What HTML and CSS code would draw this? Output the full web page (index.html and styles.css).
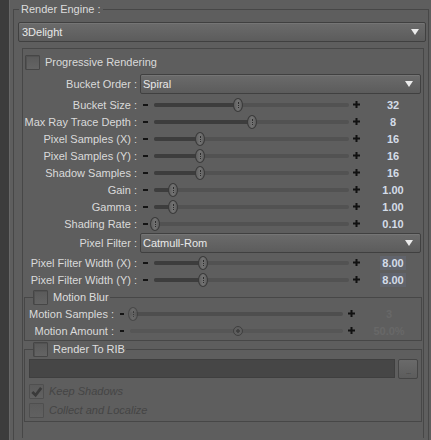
FILE: index.html
```html
<!DOCTYPE html>
<html>
<head>
<meta charset="utf-8">
<link rel="stylesheet" href="styles.css">
</head>
<body>
<div class="strip"></div>
<div class="main">
  <fieldset class="engine">
    <legend class="engine-title">Render Engine :</legend>
    <div class="engine-body">
      <div class="select big"><span>3Delight</span><svg class="arrow" width="8" height="6" viewBox="0 0 8 6"><path d="M0 0H8L4 6Z" fill="#ececec"/></svg></div>
      <div class="frame">
        <div class="check-row first"><span class="cb"></span><span>Progressive Rendering</span></div>

        <div class="row sel-row"><span class="lbl">Bucket Order :</span><div class="select"><span>Spiral</span><svg class="arrow" width="8" height="6" viewBox="0 0 8 6"><path d="M0 0H8L4 6Z" fill="#ececec"/></svg></div></div>

        <div class="sliders">
          <div class="row srow"><span class="lbl">Bucket Size :</span><span class="minus"></span><span class="track" style="--p:84px"><span class="fill"></span><span class="thumb"></span></span><svg class="plus" width="7" height="7" viewBox="0 0 7 7"><path d="M2.5 0h2v7h-2zM0 2.5h7v2H0z" fill="#111"/></svg><span class="val">32</span></div>
          <div class="row srow"><span class="lbl">Max Ray Trace Depth :</span><span class="minus"></span><span class="track" style="--p:98px"><span class="fill"></span><span class="thumb"></span></span><svg class="plus" width="7" height="7" viewBox="0 0 7 7"><path d="M2.5 0h2v7h-2zM0 2.5h7v2H0z" fill="#111"/></svg><span class="val">8</span></div>
          <div class="row srow"><span class="lbl">Pixel Samples (X) :</span><span class="minus"></span><span class="track" style="--p:46px"><span class="fill"></span><span class="thumb"></span></span><svg class="plus" width="7" height="7" viewBox="0 0 7 7"><path d="M2.5 0h2v7h-2zM0 2.5h7v2H0z" fill="#111"/></svg><span class="val">16</span></div>
          <div class="row srow"><span class="lbl">Pixel Samples (Y) :</span><span class="minus"></span><span class="track" style="--p:46px"><span class="fill"></span><span class="thumb"></span></span><svg class="plus" width="7" height="7" viewBox="0 0 7 7"><path d="M2.5 0h2v7h-2zM0 2.5h7v2H0z" fill="#111"/></svg><span class="val">16</span></div>
          <div class="row srow"><span class="lbl">Shadow Samples :</span><span class="minus"></span><span class="track" style="--p:46px"><span class="fill"></span><span class="thumb"></span></span><svg class="plus" width="7" height="7" viewBox="0 0 7 7"><path d="M2.5 0h2v7h-2zM0 2.5h7v2H0z" fill="#111"/></svg><span class="val">16</span></div>
          <div class="row srow"><span class="lbl">Gain :</span><span class="minus"></span><span class="track" style="--p:19px"><span class="fill"></span><span class="thumb"></span></span><svg class="plus" width="7" height="7" viewBox="0 0 7 7"><path d="M2.5 0h2v7h-2zM0 2.5h7v2H0z" fill="#111"/></svg><span class="val">1.00</span></div>
          <div class="row srow"><span class="lbl">Gamma :</span><span class="minus"></span><span class="track" style="--p:19px"><span class="fill"></span><span class="thumb"></span></span><svg class="plus" width="7" height="7" viewBox="0 0 7 7"><path d="M2.5 0h2v7h-2zM0 2.5h7v2H0z" fill="#111"/></svg><span class="val">1.00</span></div>
          <div class="row srow"><span class="lbl">Shading Rate :</span><span class="minus"></span><span class="track" style="--p:1px"><span class="fill"></span><span class="thumb"></span></span><svg class="plus" width="7" height="7" viewBox="0 0 7 7"><path d="M2.5 0h2v7h-2zM0 2.5h7v2H0z" fill="#111"/></svg><span class="val">0.10</span></div>
        </div>

        <div class="row sel-row pf"><span class="lbl">Pixel Filter :</span><div class="select"><span>Catmull-Rom</span><svg class="arrow" width="8" height="6" viewBox="0 0 8 6"><path d="M0 0H8L4 6Z" fill="#ececec"/></svg></div></div>

        <div class="sliders pfw">
          <div class="row srow"><span class="lbl">Pixel Filter Width (X) :</span><span class="minus"></span><span class="track" style="--p:49px"><span class="fill"></span><span class="thumb"></span></span><svg class="plus" width="7" height="7" viewBox="0 0 7 7"><path d="M2.5 0h2v7h-2zM0 2.5h7v2H0z" fill="#111"/></svg><span class="val"><span class="hl">8.00</span></span></div>
          <div class="row srow"><span class="lbl">Pixel Filter Width (Y) :</span><span class="minus"></span><span class="track" style="--p:49px"><span class="fill"></span><span class="thumb"></span></span><svg class="plus" width="7" height="7" viewBox="0 0 7 7"><path d="M2.5 0h2v7h-2zM0 2.5h7v2H0z" fill="#111"/></svg><span class="val"><span class="hl">8.00</span></span></div>
        </div>

        <fieldset class="sub motion">
          <legend><span class="cb"></span><span>Motion Blur</span></legend>
          <div class="row mrow"><span class="lbl">Motion Samples :</span><span class="minus"></span><span class="track off" style="--p:3px"><span class="thumb"></span></span><svg class="plus" width="7" height="7" viewBox="0 0 7 7"><path d="M2.5 0h2v7h-2zM0 2.5h7v2H0z" fill="#111"/></svg><span class="val dis">3</span></div>
          <div class="row mrow"><span class="lbl">Motion Amount :</span><span class="minus"></span><span class="track off light" style="--p:108px"><span class="knob"></span></span><svg class="plus" width="7" height="7" viewBox="0 0 7 7"><path d="M2.5 0h2v7h-2zM0 2.5h7v2H0z" fill="#111"/></svg><span class="val dis">50.0%</span></div>
        </fieldset>

        <fieldset class="sub rib">
          <legend><span class="cb"></span><span>Render To RIB</span></legend>
          <div class="path-row"><span class="field"></span><span class="btn">...</span></div>
          <div class="check-row dim keep"><span class="cb on"><svg width="14" height="14" viewBox="0 0 14 14"><path d="M2.5 7L6 10.5L12 2.5" fill="none" stroke="#3a3a3a" stroke-width="3"/></svg></span><span>Keep Shadows</span></div>
          <div class="check-row dim collect"><span class="cb"></span><span>Collect and Localize</span></div>
        </fieldset>
      </div>
    </div>
  </fieldset>
</div>
</body>
</html>
```

FILE: styles.css
```css
html, body {
  margin: 0;
  padding: 0;
}
body {
  width: 431px;
  height: 440px;
  overflow: hidden;
  display: flex;
  background: #5e5e5e;
  font-family: "Liberation Sans", Arial, sans-serif;
  font-size: 11px;
  color: #dadada;
}
.strip {
  flex: none;
  width: 9px;
  background: #3c3c3c;
  border-right: 1px solid #686868;
}
.main {
  flex: 1;
  min-width: 0;
  padding: 0 2px 0 3px;
}
fieldset {
  margin: 0;
  padding: 0;
  min-width: 0;
  border: 1px solid #474747;
}
.engine {
  margin-top: 2px;
  box-sizing: border-box;
  height: 438px;
  border-bottom: none;
  overflow: hidden;
}
.engine-title {
  margin-left: 5px;
  padding: 0 2px;
  line-height: 14px;
  height: 14px;
  font-size: 11px;
  color: #dcdcdc;
}
.engine-body {
  padding: 6px 2px 0 4px;
}
.select {
  box-sizing: border-box;
  height: 20px;
  display: flex;
  align-items: center;
  justify-content: space-between;
  padding: 0 7px 0 2px;
  border: 1px solid #404040;
  border-radius: 2px;
  background: linear-gradient(#6b6b6b, #5c5c5c);
  color: #e8e8e8;
  box-shadow: inset 0 1px 0 #757575;
}
.select.big {
  padding-right: 6px;
  padding-left: 3px;
}
.arrow {
  flex: none;
}
.frame {
  margin: 6px 2px 0 4px;
  border: 1px solid #474747;
  border-bottom: none;
  padding: 6px 0 16px 0;
}
.check-row {
  display: flex;
  align-items: center;
  gap: 5px;
  height: 15px;
  line-height: 15px;
}
.check-row.first {
  padding-left: 2px;
}
.cb {
  flex: none;
  box-sizing: border-box;
  width: 15px;
  height: 15px;
  border: 1px solid #464646;
  border-radius: 1px;
  background: linear-gradient(#5a5a5a, #646464);
  box-shadow: inset 1px 1px 0 #525252;
  display: flex;
  align-items: center;
  justify-content: center;
}
.row {
  display: flex;
  align-items: center;
}
.lbl {
  flex: none;
  text-align: right;
  white-space: nowrap;
}
.sel-row {
  margin-top: 4px;
  height: 20px;
}
.sel-row .lbl {
  width: 114px;
}
.sel-row .select {
  margin-left: 3px;
  width: 281px;
}
.sel-row.pf {
  margin-top: 1px;
}
.sliders {
  margin-top: 2px;
}
.sliders.pfw {
  margin-top: 1px;
}
.srow, .mrow {
  height: 17px;
}
.srow .lbl {
  width: 114px;
}
.minus {
  flex: none;
  width: 5px;
  height: 2px;
  margin-left: 6px;
  background: #141414;
}
.track {
  flex: none;
  position: relative;
  height: 4px;
  border-radius: 2px;
  background: #525252;
  margin-left: 6px;
  width: 195px;
}
.fill {
  display: block;
  width: var(--p);
  height: 4px;
  border-radius: 2px;
  background: #3d3d3d;
}
.thumb {
  position: absolute;
  box-sizing: border-box;
  left: calc(var(--p) - 5px);
  top: -5px;
  width: 10px;
  height: 14px;
  border-radius: 50%;
  border: 1px solid #3a3a3a;
  background: linear-gradient(90deg, #5f5f5f, #737373 50%, #5f5f5f);
}
.thumb::after {
  content: "";
  position: absolute;
  left: 3.5px;
  top: 3px;
  height: 6px;
  border-left: 1px dotted #2c2c2c;
}
.plus {
  flex: none;
  margin-left: 4px;
}
.val {
  flex: none;
  width: 54px;
  margin-left: 6px;
  text-align: center;
  font-weight: bold;
  color: #d4dce8;
}
.hl {
  background: #61646c;
  padding: 1px 2px;
}
.sub {
  margin: 2px 1px 0 1px;
}
.sub legend {
  display: flex;
  align-items: center;
  gap: 5px;
  margin-left: 8px;
  padding: 0 1px 0 0;
  height: 15px;
  line-height: 15px;
  color: #dedede;
}
.motion {
  padding-bottom: 1px;
}
.mrow .lbl {
  width: 89px;
}
.mrow .minus {
  width: 4px;
}
.mrow .track {
  width: 213px;
  margin-left: 6px;
  background: #4e4e4e;
}
.mrow .track.light {
  background: #565656;
}
.mrow .thumb {
  opacity: 0.6;
}
.mrow .plus {
  margin-left: 5px;
}
.mrow .val {
  width: 56px;
}
.val.dis {
  color: #686868;
}
.knob {
  position: absolute;
  box-sizing: border-box;
  left: calc(var(--p) - 5px);
  top: -3px;
  width: 10px;
  height: 10px;
  border-radius: 50%;
  border: 1px solid #3f3f3f;
  background: radial-gradient(circle, #3f3f3f 0 1.5px, #5e5e5e 2px);
}
.rib {
  margin-top: 1px;
  padding-bottom: 3px;
}
.path-row {
  display: flex;
  margin: 2px 0 0 4px;
  height: 20px;
}
.field {
  box-sizing: border-box;
  width: 366px;
  height: 19px;
  background: #464646;
  border: 1px solid #3f3f3f;
}
.btn {
  box-sizing: border-box;
  margin-left: 3px;
  width: 20px;
  height: 20px;
  border: 1px solid #454545;
  border-radius: 2px;
  background: linear-gradient(#6a6a6a, #5c5c5c);
  color: #4a4a4a;
  font-size: 9px;
  line-height: 22px;
  text-align: center;
  letter-spacing: -1px;
}
.check-row.dim {
  padding-left: 4px;
  color: #454545;
  font-style: italic;
}
.check-row.dim .cb {
  border-color: #4f4f4f;
  background: linear-gradient(#5b5b5b, #616161);
  box-shadow: none;
}
.keep {
  margin-top: 5px;
}
.collect {
  margin-top: 4px;
}
```
